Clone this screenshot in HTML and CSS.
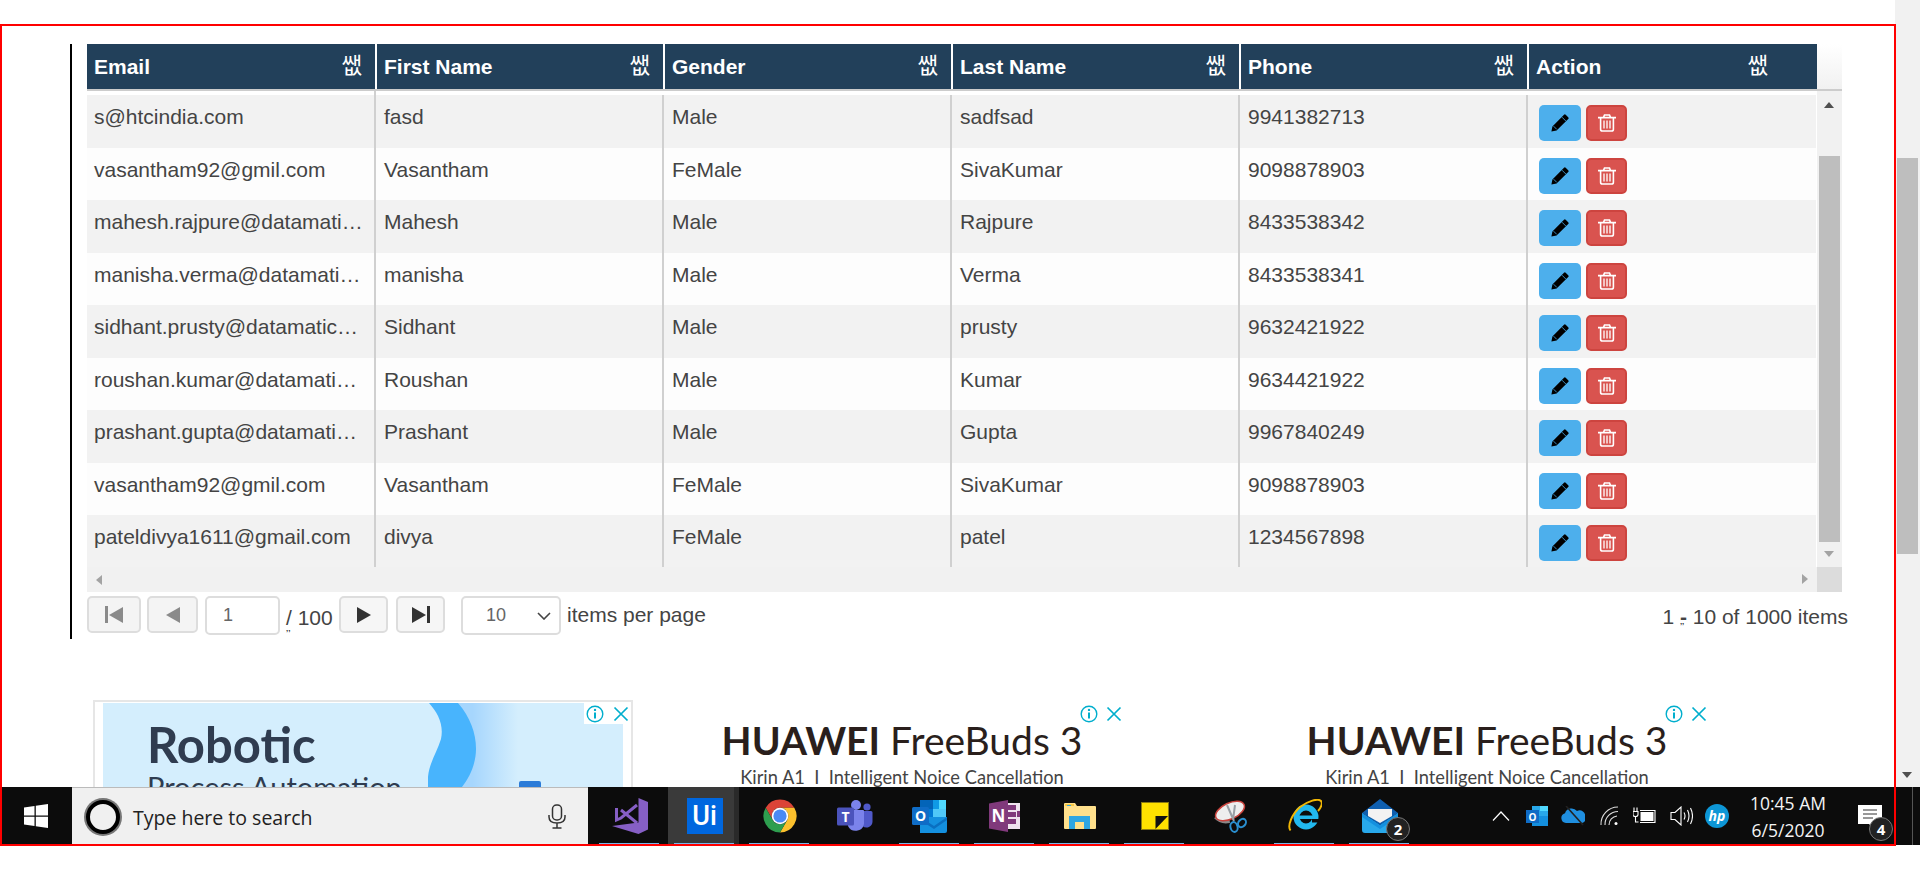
FILE: index.html
```html
<!DOCTYPE html>
<html lang="en">

<head>
  <meta charset="UTF-8">
  <title>Users</title>
  <link rel="stylesheet" href="styles.css">
</head>

<body>
  <svg class="defs" width="0" height="0">
    <symbol id="pencil" viewBox="0 0 18 18">
      <path d="M13 .8a1.2 1.2 0 0 1 1.7 0l2.500 2.500a1.2 1.2 0 0 1 0 1.7L5.600 16.600.4 17.600l1-5.200z" fill="#000" />
      <path d="M11 3.200l3.800 3.800M2.600 12.200l3.200 3.200" stroke="#4dafec" stroke-width=".8" fill="none" />
    </symbol>
    <symbol id="trash" viewBox="0 0 18 18">
      <path d="M0 3.600h18M5.500 3.400l1-2.400h5l1 2.400M2.600 3.600v11.600q0 1.800 1.800 1.800h9.200q1.800 0 1.800-1.800V3.600" stroke="#fff" stroke-width="1.600" fill="none" />
      <path d="M6 6.500v8M9 6.500v8M12 6.500v8" stroke="#fff" stroke-width="1.300" fill="none" />
    </symbol>
    <symbol id="ad-info" viewBox="0 0 18 18">
      <circle cx="9" cy="9" r="7.800" stroke="#00aecd" stroke-width="1.400" fill="none" />
      <path d="M9 7.500v6" stroke="#00aecd" stroke-width="2" />
      <circle cx="9" cy="4.900" r="1.200" fill="#00aecd" />
    </symbol>
    <symbol id="ad-close" viewBox="0 0 16 16">
      <path d="M1.500 1.500l13 13M14.500 1.500l-13 13" stroke="#00aecd" stroke-width="1.700" />
    </symbol>
  </svg>

  <div class="window">
    <main class="page">
      <section class="grid-panel">
        <div class="grid">
          <div class="grid-head">
            <div class="head-cells">
              <div class="head-cell">Email<span class="sort">쌦</span></div>
              <div class="head-cell">First Name<span class="sort">쌦</span></div>
              <div class="head-cell">Gender<span class="sort">쌦</span></div>
              <div class="head-cell">Last Name<span class="sort">쌦</span></div>
              <div class="head-cell">Phone<span class="sort">쌦</span></div>
              <div class="head-cell head-cell-action">Action<span class="sort">쌦</span></div>
            </div>
            <div class="head-filler"></div>
          </div>

          <div class="grid-body">
            <div class="rows">
              <div class="row">
                <div class="cell">s@htcindia.com</div>
                <div class="cell">fasd</div>
                <div class="cell">Male</div>
                <div class="cell">sadfsad</div>
                <div class="cell">9941382713</div>
                <div class="cell cell-action">
                  <button class="btn btn-edit"><svg><use href="#pencil" /></svg></button>
                  <button class="btn btn-delete"><svg><use href="#trash" /></svg></button>
                </div>
              </div>
              <div class="row">
                <div class="cell">vasantham92@gmil.com</div>
                <div class="cell">Vasantham</div>
                <div class="cell">FeMale</div>
                <div class="cell">SivaKumar</div>
                <div class="cell">9098878903</div>
                <div class="cell cell-action">
                  <button class="btn btn-edit"><svg><use href="#pencil" /></svg></button>
                  <button class="btn btn-delete"><svg><use href="#trash" /></svg></button>
                </div>
              </div>
              <div class="row">
                <div class="cell">mahesh.rajpure@datamati…</div>
                <div class="cell">Mahesh</div>
                <div class="cell">Male</div>
                <div class="cell">Rajpure</div>
                <div class="cell">8433538342</div>
                <div class="cell cell-action">
                  <button class="btn btn-edit"><svg><use href="#pencil" /></svg></button>
                  <button class="btn btn-delete"><svg><use href="#trash" /></svg></button>
                </div>
              </div>
              <div class="row">
                <div class="cell">manisha.verma@datamati…</div>
                <div class="cell">manisha</div>
                <div class="cell">Male</div>
                <div class="cell">Verma</div>
                <div class="cell">8433538341</div>
                <div class="cell cell-action">
                  <button class="btn btn-edit"><svg><use href="#pencil" /></svg></button>
                  <button class="btn btn-delete"><svg><use href="#trash" /></svg></button>
                </div>
              </div>
              <div class="row">
                <div class="cell">sidhant.prusty@datamatic…</div>
                <div class="cell">Sidhant</div>
                <div class="cell">Male</div>
                <div class="cell">prusty</div>
                <div class="cell">9632421922</div>
                <div class="cell cell-action">
                  <button class="btn btn-edit"><svg><use href="#pencil" /></svg></button>
                  <button class="btn btn-delete"><svg><use href="#trash" /></svg></button>
                </div>
              </div>
              <div class="row">
                <div class="cell">roushan.kumar@datamati…</div>
                <div class="cell">Roushan</div>
                <div class="cell">Male</div>
                <div class="cell">Kumar</div>
                <div class="cell">9634421922</div>
                <div class="cell cell-action">
                  <button class="btn btn-edit"><svg><use href="#pencil" /></svg></button>
                  <button class="btn btn-delete"><svg><use href="#trash" /></svg></button>
                </div>
              </div>
              <div class="row">
                <div class="cell">prashant.gupta@datamati…</div>
                <div class="cell">Prashant</div>
                <div class="cell">Male</div>
                <div class="cell">Gupta</div>
                <div class="cell">9967840249</div>
                <div class="cell cell-action">
                  <button class="btn btn-edit"><svg><use href="#pencil" /></svg></button>
                  <button class="btn btn-delete"><svg><use href="#trash" /></svg></button>
                </div>
              </div>
              <div class="row">
                <div class="cell">vasantham92@gmil.com</div>
                <div class="cell">Vasantham</div>
                <div class="cell">FeMale</div>
                <div class="cell">SivaKumar</div>
                <div class="cell">9098878903</div>
                <div class="cell cell-action">
                  <button class="btn btn-edit"><svg><use href="#pencil" /></svg></button>
                  <button class="btn btn-delete"><svg><use href="#trash" /></svg></button>
                </div>
              </div>
              <div class="row">
                <div class="cell">pateldivya1611@gmail.com</div>
                <div class="cell">divya</div>
                <div class="cell">FeMale</div>
                <div class="cell">patel</div>
                <div class="cell">1234567898</div>
                <div class="cell cell-action">
                  <button class="btn btn-edit"><svg><use href="#pencil" /></svg></button>
                  <button class="btn btn-delete"><svg><use href="#trash" /></svg></button>
                </div>
              </div>
            </div>
            <div class="vscroll">
              <span class="arrow arrow-up"></span>
              <span class="vscroll-thumb"></span>
              <span class="arrow arrow-down"></span>
            </div>
          </div>

          <div class="grid-foot">
            <div class="hscroll">
              <span class="arrow arrow-left"></span>
              <span class="arrow arrow-right"></span>
            </div>
            <div class="corner"></div>
          </div>
        </div>

        <div class="pager">
          <button class="pg-btn pg-first is-off"><span class="bar"></span><span class="tri-left"></span></button>
          <button class="pg-btn pg-prev is-off"><span class="tri-left"></span></button>
          <input class="pg-input" value="1">
          <span class="pg-total"><span class="glitch">/</span> 100</span>
          <button class="pg-btn pg-next"><span class="tri-right"></span></button>
          <button class="pg-btn pg-last"><span class="tri-right"></span><span class="bar"></span></button>
          <div class="pg-size">10
            <svg width="14" height="8" viewBox="0 0 14 8"><path d="M1 1l6 6 6-6" stroke="#444" stroke-width="1.600" fill="none" /></svg>
          </div>
          <span class="pg-label">items per page</span>
          <span class="pg-info">1 <span class="glitch glitch-dash">-</span> 10 of 1000 items</span>
        </div>
      </section>

      <section class="ads">
        <div class="ad ad-robotic">
          <div class="ad-panel">
            <svg class="ad-curve" width="100" height="84" viewBox="0 0 100 84">
              <defs>
                <linearGradient id="glow" x1="0" x2="1">
                  <stop offset="0.35" stop-color="#a6d6fd" />
                  <stop offset="1" stop-color="#d4eefd" />
                </linearGradient>
              </defs>
              <path d="M20 0H90V84H20z" fill="url(#glow)" />
              <path d="M1 0H30C42 14 48 30 48 46 48 60 42 74 34 84H0C-2 64 8 52 13 36 16 22 10 10 1 0z" fill="#48b4fd" />
            </svg>
            <div class="ad-title">Robotic</div>
            <div class="ad-sub">Process Automation</div>
            <span class="ad-chip"></span>
          </div>
          <div class="ad-tools ad-tools-white">
            <svg width="18" height="18"><use href="#ad-info" /></svg>
            <svg width="16" height="16"><use href="#ad-close" /></svg>
          </div>
        </div>
        <div class="ad ad-huawei">
          <div class="hw-title"><b>HUAWEI</b> FreeBuds 3</div>
          <div class="hw-sub">Kirin A1 &nbsp;I&nbsp; Intelligent Noice Cancellation</div>
          <div class="ad-tools">
            <svg width="18" height="18"><use href="#ad-info" /></svg>
            <svg width="16" height="16"><use href="#ad-close" /></svg>
          </div>
        </div>
        <div class="ad ad-huawei ad-last">
          <div class="hw-title"><b>HUAWEI</b> FreeBuds 3</div>
          <div class="hw-sub">Kirin A1 &nbsp;I&nbsp; Intelligent Noice Cancellation</div>
          <div class="ad-tools">
            <svg width="18" height="18"><use href="#ad-info" /></svg>
            <svg width="16" height="16"><use href="#ad-close" /></svg>
          </div>
        </div>
      </section>
    </main>

    <div class="page-scroll">
      <span class="page-thumb"></span>
      <span class="arrow arrow-down arrow-dark"></span>
    </div>
  </div>

  <footer class="taskbar">
    <div class="start">
      <svg width="24" height="24" viewBox="0 0 24 24" fill="#fff">
        <polygon points="0,3.500 10.500,2 10.500,11.500 0,11.500" />
        <polygon points="11.800,1.800 24,0 24,11.500 11.800,11.500" />
        <polygon points="0,12.800 10.500,12.800 10.500,22 0,20.500" />
        <polygon points="11.800,12.800 24,12.800 24,24 11.800,22.200" />
      </svg>
    </div>
    <div class="search">
      <span class="cortana"></span>
      <span class="search-text">Type here to search</span>
      <svg class="mic" width="18" height="25" viewBox="0 0 18 25" fill="none" stroke="#333" stroke-width="1.500">
        <rect x="4.500" y="1" width="9" height="15" rx="4" />
        <path d="M1 11v2q0 6 8 6t8-6v-2M9 19v5M4.500 24h9" />
      </svg>
    </div>

    <div class="tasks">
      <div class="task is-open">
        <svg width="36" height="36" viewBox="0 0 36 36">
          <path d="M26.500 0L36 4v27.500L26.500 36 0 28l26.500-3.500z" fill="#865fc5" />
          <path d="M4.500 10v12L9 20 25 7M9 12l16 13" stroke="#865fc5" stroke-width="3" fill="none" />
        </svg>
      </div>
      <div class="task is-open is-active">
        <span class="ui-logo">Ui</span>
      </div>
      <div class="task is-open">
        <svg width="34" height="34" viewBox="0 0 34 34">
          <path d="M2.700 8.750A16.500 16.500 0 0 1 31.300 8.750H17A8.250 8.250 0 0 0 9.860 21.130z" fill="#db4437" />
          <path d="M31.300 8.750A16.500 16.500 0 0 1 17 33.500L24.140 21.130A8.250 8.250 0 0 0 17 8.750z" fill="#fbc02d" />
          <path d="M17 33.500A16.500 16.500 0 0 1 2.700 8.750L9.860 21.130A8.250 8.250 0 0 0 24.140 21.130z" fill="#2e9e4f" />
          <circle cx="17" cy="17" r="8.300" fill="#fff" />
          <circle cx="17" cy="17" r="6.600" fill="#4a8af4" />
        </svg>
      </div>
      <div class="task">
        <svg width="36" height="33" viewBox="0 0 36 33">
          <circle cx="19" cy="5" r="5" fill="#7b83eb" />
          <circle cx="30" cy="7" r="3.600" fill="#5059c9" />
          <path d="M25 11h9q1.500 0 1.500 1.500v9a6 6 0 0 1-10 4.500z" fill="#5059c9" />
          <path d="M11 10h15q1 0 1 1v13a8.500 8.500 0 0 1-16 2z" fill="#7b83eb" />
          <rect x="0" y="7.500" width="17" height="18" rx="1.500" fill="#4b53bc" />
          <text x="8.500" y="21.500" class="logo-text" font-size="14">T</text>
        </svg>
      </div>
      <div class="task is-open">
        <svg width="35" height="33" viewBox="0 0 35 33">
          <rect x="8" y="0" width="26" height="17" fill="#28a8ea" />
          <rect x="8" y="0" width="13" height="9" fill="#0364b8" />
          <rect x="21" y="0" width="13" height="9" fill="#0f9ae6" />
          <rect x="27" y="0" width="7" height="9" fill="#50d9ff" />
          <rect x="21" y="9" width="13" height="8" fill="#50c8f8" />
          <rect x="8" y="9" width="13" height="8" fill="#0078d4" />
          <path d="M8 17h27v14q0 2-2 2H8z" fill="#1490df" />
          <path d="M8 17l14 9 13-9v3L22 29 8 20z" fill="#0a6fc0" />
          <rect x="0" y="7" width="17" height="18" rx="1.500" fill="#0f6cc6" />
          <text x="8.500" y="21" class="logo-text" font-size="14">O</text>
        </svg>
      </div>
      <div class="task is-open">
        <svg width="31" height="32" viewBox="0 0 31 32">
          <path d="M0 3.500L19 0v32L0 28.500z" fill="#80397b" />
          <rect x="19" y="3" width="12" height="26" fill="#efe3ee" />
          <path d="M19 5h8v5h-8zM19 12h8v5h-8zM19 19h8v5h-8zM28 11h3v6h-3z" fill="#80397b" />
          <text x="9.500" y="22" class="logo-text" font-size="17">N</text>
        </svg>
      </div>
      <div class="task is-open">
        <svg width="32" height="26" viewBox="0 0 32 26">
          <path d="M0 1q0-1 1-1h10l2 3h18q1 0 1 1v21q0 1-1 1H1q-1 0-1-1z" fill="#ffe08c" />
          <path d="M1 1h9v2H1z" fill="#f6c744" />
          <path d="M3 2h4v1H3z" fill="#2fa6e2" />
          <path d="M5 13h21v13h-6v-7H11v7H5z" fill="#2fa6e2" />
        </svg>
      </div>
      <div class="task is-open">
        <svg width="28" height="28" viewBox="0 0 28 28">
          <rect x=".5" y=".5" width="27" height="27" fill="#ffe100" stroke="#8a7a10" />
          <path d="M14.500 14H27L14.500 27z" fill="#111" />
        </svg>
      </div>
      <div class="task">
        <svg width="34" height="34" viewBox="0 0 34 34" fill="none">
          <path d="M1 19q8-4 15-1l1 6q-10 2-16-5z" fill="#888" />
          <ellipse cx="17" cy="12" rx="15.500" ry="8" transform="rotate(-25 17 12)" fill="#eee" stroke="#c8413b" stroke-width="1.500" />
          <path d="M14 6l7 16M22 6l-2 15" stroke="#9aa0a6" stroke-width="2" />
          <ellipse cx="21" cy="28" rx="3.500" ry="5" transform="rotate(-15 21 28)" stroke="#2a8fd0" stroke-width="2" />
          <ellipse cx="29" cy="24" rx="3.500" ry="4.500" transform="rotate(40 29 24)" stroke="#2a8fd0" stroke-width="2" />
        </svg>
      </div>
      <div class="task is-open">
        <svg width="34" height="34" viewBox="0 0 34 34" fill="none">
          <circle cx="18" cy="18" r="9.500" stroke="#22b8ee" stroke-width="6" />
          <rect x="9" y="16.500" width="19" height="3.500" fill="#22b8ee" />
          <rect x="24" y="20" width="10" height="3.500" fill="#0c0c0c" />
          <path d="M2.500 31.500C-1 27 4 15 12 8 20 2 30-1 33 2c2 2 0 7-3 10" stroke="#f2b705" stroke-width="2" />
        </svg>
      </div>
      <div class="task is-open has-badge">
        <svg width="36" height="34" viewBox="0 0 36 34">
          <path d="M0 14l18 12 18-12v17q0 3-3 3H3q-3 0-3-3z" fill="#28a8ea" />
          <path d="M18 0l18 14-18 12L0 14z" fill="#0f5fb0" />
          <path d="M6 10h24v7l-12 7-12-7z" fill="#f2f2f2" />
          <path d="M0 14l18 12 18-12v4L18 30 0 18z" fill="#1490df" />
        </svg>
        <span class="badge">2</span>
      </div>
    </div>

    <div class="tray">
      <span class="tray-icon">
        <svg width="18" height="10" viewBox="0 0 18 10" fill="none"><path d="M1 9.500L9 1l8 8.500" stroke="#fff" stroke-width="1.200" /></svg>
      </span>
      <span class="tray-icon">
        <svg width="22" height="20" viewBox="0 0 22 20">
          <rect x="6" y="0" width="16" height="10" fill="#28a8ea" />
          <rect x="14" y="0" width="8" height="5" fill="#50d9ff" />
          <path d="M6 10h16v10H6z" fill="#1490df" />
          <rect x="0" y="4" width="13" height="13" fill="#0f6cc6" />
          <text x="6.500" y="14.500" class="logo-text" font-size="10">O</text>
        </svg>
      </span>
      <span class="tray-icon">
        <svg width="24" height="20" viewBox="0 0 24 20">
          <path d="M5 17a5 5 0 0 1-1-9.800A7 7 0 0 1 16 5a5.500 5.500 0 0 1 8 6 4 4 0 0 1-3 6z" fill="#1f8fe0" />
          <path d="M5 0l17 19" stroke="#222" stroke-width="1.600" />
        </svg>
      </span>
      <span class="tray-icon">
        <svg width="19" height="20" viewBox="0 0 19 20" fill="none" stroke="#ddd" stroke-width="1.100">
          <path d="M1 19A17 17 0 0 1 18 1M5 19A13 13 0 0 1 18 5.500M9 19a9 9 0 0 1 8-9" />
          <circle cx="16" cy="17.500" r="1.500" fill="#fff" stroke="none" />
        </svg>
      </span>
      <span class="tray-icon">
        <svg width="24" height="18" viewBox="0 0 24 18" fill="none" stroke="#fff" stroke-width="1.100">
          <path d="M1 .5v4M4 .5v4M0 4.500h5v3q0 2-2.500 2T0 7.500zM2.500 9.500V15h3" />
          <path d="M7 3.500h15v12H7" />
          <rect x="7.500" y="5" width="13" height="9" fill="#fff" stroke="none" />
        </svg>
      </span>
      <span class="tray-icon">
        <svg width="23" height="20" viewBox="0 0 23 20" fill="none" stroke="#fff" stroke-width="1.100">
          <path d="M1 6.500h4L11 1v18l-6-5.500H1z" />
          <path d="M14 6.500q2 3.500 0 7M17.500 4q3 6 0 12M20.500 2q4 8 0 16" />
        </svg>
      </span>
      <span class="tray-icon">
        <span class="hp-logo">hp</span>
      </span>
    </div>

    <div class="clock">
      <span>10:45 AM</span>
      <span>6/5/2020</span>
    </div>

    <div class="notify has-badge">
      <svg width="24" height="24" viewBox="0 0 24 24">
        <path d="M0 0h24v19h-8v5l-5-5H0z" fill="#fff" />
        <path d="M5 5h14M5 9h14M5 13h10" stroke="#333" stroke-width="1" />
      </svg>
      <span class="badge">4</span>
    </div>
    <div class="show-desktop"></div>
  </footer>

  <div class="bottom-strip"></div>
  <div class="red-frame"></div>
</body>

</html>
```

FILE: styles.css
```css
* {
  margin: 0;
  padding: 0;
  box-sizing: border-box;
}

html,
body {
  width: 1920px;
  height: 871px;
  overflow: hidden;
  background: #fff;
}

body {
  display: flex;
  flex-direction: column;
  position: relative;
  font-family: 'Liberation Sans', Arial, sans-serif;
  color: #444;
}

button {
  font-family: inherit;
}

.defs {
  position: absolute;
}

.window {
  display: flex;
  height: 787px;
  flex: none;
}

.page {
  width: 1895px;
  height: 787px;
  padding: 44px 0 0 70px;
  overflow: hidden;
}

/* grid */
.grid-panel {
  width: 1772px;
  height: 595px;
  padding-left: 15px;
  border-left: 2px solid #000;
}

.grid {
  width: 1755px;
}

.grid-head {
  display: flex;
  height: 47px;
  border-bottom: 2px solid #ccc;
}

.head-cells {
  display: grid;
  grid-template-columns: 290px repeat(4, 288px) 1fr;
  width: 1730px;
  background: #22405a;
}

.head-cell {
  display: flex;
  align-items: center;
  justify-content: space-between;
  padding: 0 13px 0 7px;
  border-right: 2px solid #fff;
  color: #fff;
  font-size: 21px;
  font-weight: bold;
}

.head-cell-action {
  border-right: 0;
  padding-right: 49px;
}

.sort {
  font-family: 'Noto Sans CJK KR', sans-serif;
  font-size: 22px;
  font-weight: normal;
  line-height: 22px;
  margin-top: -7px;
}

.head-filler {
  width: 25px;
  background: linear-gradient(#fff, #f1f1f1);
}

.grid-body {
  display: flex;
  height: 476px;
}

.rows {
  width: 1730px;
  padding-top: 4px;
  border-right: 1px solid #fff;
  background: linear-gradient(90deg, #fff 287px, #d0d0d0 287px, #d0d0d0 289px, #fff 289px) 0 0 / 100% 4px no-repeat;
}

.row {
  display: grid;
  grid-template-columns: 289px repeat(4, 288px) 1fr;
  height: 52.5px;
  background: #fdfdfd;
}

.row:nth-child(odd) {
  background: #f2f2f2;
}

.cell {
  min-width: 0;
  padding: 10px 8px 0 8px;
  border-right: 2px solid #d0d0d0;
  font-size: 21px;
  line-height: 24px;
  white-space: nowrap;
}

.cell:first-child {
  padding-left: 7px;
}

.cell-action {
  display: flex;
  gap: 5px;
  padding-left: 11px;
  border-right: 0;
}

.btn {
  width: 42px;
  height: 36px;
  display: flex;
  align-items: center;
  justify-content: center;
  border: 0;
  border-radius: 5px;
}

.btn svg {
  width: 18px;
  height: 18px;
}

.btn-edit {
  background: #4dafec;
}

.btn-delete {
  width: 41px;
  background: #d9534f;
  border: 2px solid #cd443f;
}

/* scrollbars */
.vscroll {
  width: 25px;
  padding: 0 2px;
  background: #f1f1f1;
  position: relative;
}

.vscroll-thumb {
  display: block;
  height: 386px;
  margin-top: 65px;
  background: #bebebe;
}

.arrow {
  position: absolute;
  width: 0;
  height: 0;
  border-style: solid;
  border-color: transparent;
}

.arrow-up {
  top: 11px;
  left: 7px;
  border-width: 0 5.500px 6px;
  border-bottom-color: #505050;
}

.arrow-down {
  bottom: 10px;
  left: 7px;
  border-width: 6px 5.500px 0;
  border-top-color: #a3a3a3;
}

.grid-foot {
  display: flex;
  height: 25px;
}

.hscroll {
  width: 1730px;
  background: #f1f1f1;
  position: relative;
}

.arrow-left {
  top: 8px;
  left: 9px;
  border-width: 5.500px 6px 5.500px 0;
  border-right-color: #a3a3a3;
}

.arrow-right {
  top: 7px;
  right: 9px;
  border-width: 5.500px 0 5.500px 6px;
  border-left-color: #a3a3a3;
}

.corner {
  width: 25px;
  background: #dcdcdc;
}

/* pager */
.pager {
  display: flex;
  align-items: flex-start;
  width: 1761px;
  padding-top: 4px;
  font-size: 21px;
  color: #444;
}

.pg-btn {
  display: flex;
  align-items: center;
  justify-content: center;
  gap: 1px;
  width: 54px;
  height: 37px;
  border: 2px solid #ddd;
  border-radius: 5px;
  background: #f6f6f6;
  color: #333;
}

.pg-prev {
  margin-left: 6px;
  width: 51px;
}

.tri-left,
.tri-right {
  width: 0;
  height: 0;
  border-style: solid;
  border-color: transparent;
}

.tri-left {
  border-width: 8px 14px 8px 0;
  border-right-color: #333;
}

.tri-right {
  border-width: 8px 0 8px 14px;
  border-left-color: #333;
}

.bar {
  width: 3px;
  height: 17px;
  background: #333;
}

.is-off {
  background: #f4f4f4;
}

.is-off .tri-left {
  border-right-color: #8a8a8a;
}

.is-off .bar {
  background: #8a8a8a;
}

.pg-input {
  width: 75px;
  height: 39px;
  margin-left: 7px;
  padding-left: 16px;
  border: 2px solid #ddd;
  border-radius: 5px;
  font-family: inherit;
  font-size: 18px;
  color: #666;
}

.pg-total {
  width: 53px;
  margin-left: 6px;
  padding-top: 10px;
  white-space: nowrap;
}

.glitch {
  position: relative;
}

.glitch::after {
  content: ',,';
  position: absolute;
  left: 0;
  top: 18px;
  font-size: 8px;
  font-weight: bold;
  color: #333;
}

.glitch-dash {
  font-weight: bold;
}

.glitch-dash::after {
  top: 12px;
}

.pg-next {
  width: 49px;
}

.pg-last {
  width: 49px;
  margin-left: 8px;
}

.pg-size {
  display: flex;
  align-items: center;
  justify-content: space-between;
  width: 100px;
  height: 39px;
  margin-left: 16px;
  padding: 0 8px 0 23px;
  border: 2px solid #ddd;
  border-radius: 5px;
  font-size: 18px;
  color: #666;
}

.pg-label {
  margin-left: 6px;
  padding-top: 7px;
}

.pg-info {
  margin-left: auto;
  padding-top: 9px;
}

/* ads */
.ads {
  display: flex;
  margin-top: 61px;
  padding-left: 23px;
}

.ad {
  position: relative;
  height: 200px;
  overflow: hidden;
}

.ad-robotic {
  width: 540px;
  padding: 0 8px 0 8px;
  border: 2px solid #e6e6e6;
  border-bottom: 0;
}

.ad-panel {
  position: relative;
  height: 100%;
  margin-top: 1px;
  padding: 12px 0 0 44px;
  background: #d4eefd;
  overflow: hidden;
}

.ad-curve {
  position: absolute;
  left: 325px;
  top: 0;
}

.ad-title {
  font-family: Lato, sans-serif;
  font-size: 49px;
  font-weight: bold;
  line-height: 58px;
  color: #2f3c50;
}

.ad-sub {
  margin-top: -4px;
  font-family: Lato, sans-serif;
  font-size: 29px;
  line-height: 36px;
  color: #2f3c50;
}

.ad-chip {
  position: absolute;
  left: 416px;
  top: 78px;
  width: 22px;
  height: 10px;
  background: #2a7bd8;
  border-radius: 2px;
}

.ad-tools {
  display: flex;
  align-items: center;
  gap: 8px;
  position: absolute;
  top: 3px;
  right: 5px;
  height: 21px;
  padding: 0 0 0 3px;
}

.ad-tools-white {
  top: 1px;
  right: 0;
  width: 47px;
  background: #fff;
  gap: 9px;
  padding-left: 2px;
}

.ad-huawei {
  width: 450px;
  margin-left: 44px;
  padding-top: 16px;
  text-align: center;
}

.ad-last {
  margin-left: 135px;
}

.hw-title {
  font-family: Lato, sans-serif;
  font-size: 39px;
  line-height: 48px;
  color: #2a1f1c;
  white-space: nowrap;
}

.hw-sub {
  margin-top: 1px;
  font-family: Lato, sans-serif;
  font-size: 18.300px;
  line-height: 24px;
  color: #444;
  white-space: nowrap;
}

/* page scrollbar */
.page-scroll {
  flex: 1;
  position: relative;
  background: #f1f1f1;
  padding: 158px 2px 0;
}

.page-thumb {
  display: block;
  height: 396px;
  background: #bebebe;
}

.arrow-dark {
  bottom: 9px;
  left: 7px;
  border-top-color: #505050;
}

/* taskbar */
.taskbar {
  display: flex;
  height: 58px;
  flex: none;
  background: #0c0c0c;
}

.start {
  display: flex;
  align-items: center;
  justify-content: center;
  width: 72px;
}

.search {
  display: flex;
  align-items: center;
  width: 516px;
  padding: 0 22px 0 14px;
  background: #f0f0f0;
  border-top: 1px solid #bbb;
}

.cortana {
  width: 34px;
  height: 34px;
  border-radius: 50%;
  border: 4px solid #000;
  box-shadow: 0 0 0 2px #777;
  background: #f0f0f0;
}

.search-text {
  margin-left: 13px;
  padding-top: 2px;
  font-family: 'Open Sans', sans-serif;
  font-size: 19.500px;
  color: #222;
}

.mic {
  margin-left: auto;
}

.tasks {
  display: flex;
  margin-left: 4px;
}

.task {
  position: relative;
  display: flex;
  align-items: center;
  justify-content: center;
  width: 75px;
  height: 58px;
}

.is-open::after {
  content: '';
  position: absolute;
  left: 7px;
  right: 8px;
  bottom: 0;
  height: 2px;
  background: #76b9ed;
}

.is-active {
  background: linear-gradient(90deg, transparent 0, transparent 1px, #3a3a3a 1px, #3a3a3a 67px, #2a2a2a 67px, #2a2a2a 72px, transparent 72px);
}

.ui-logo {
  display: flex;
  align-items: center;
  justify-content: center;
  width: 36px;
  height: 36px;
  background: #0067df;
  color: #fff;
  font-family: Roboto, sans-serif;
  font-size: 27px;
  font-weight: 500;
}

.logo-text {
  font-family: 'Open Sans', sans-serif;
  font-weight: bold;
  fill: #fff;
  text-anchor: middle;
}

.has-badge {
  position: relative;
}

.badge {
  position: absolute;
  width: 24px;
  height: 24px;
  border-radius: 50%;
  border: 1px solid #777;
  background: #222;
  color: #fff;
  font-family: 'Open Sans', sans-serif;
  font-size: 15px;
  font-weight: bold;
  line-height: 22px;
  text-align: center;
}

.task .badge {
  left: 44px;
  top: 30px;
}

.tray {
  display: flex;
  margin-left: auto;
}

.tray-icon {
  display: flex;
  align-items: center;
  justify-content: center;
  width: 36px;
  height: 58px;
}

.hp-logo {
  width: 24px;
  height: 24px;
  border-radius: 50%;
  background: #0d96d6;
  color: #fff;
  font-family: 'Open Sans', sans-serif;
  font-size: 14px;
  font-weight: bold;
  font-style: italic;
  line-height: 23px;
  text-align: center;
}

.clock {
  display: flex;
  flex-direction: column;
  align-items: center;
  justify-content: space-between;
  width: 90px;
  height: 58px;
  margin-left: 8px;
  padding: 5px 0 3px;
  color: #f4f4f4;
  font-family: 'Open Sans', sans-serif;
  font-size: 17.500px;
  line-height: 23px;
}

.notify {
  width: 54px;
  margin-left: 10px;
  padding: 18px 0 0 15px;
}

.notify .badge {
  left: 26px;
  top: 30px;
}

.show-desktop {
  width: 23px;
  margin-right: 0;
  background: linear-gradient(90deg, transparent 15px, #555 15px, #555 16px, transparent 16px);
}

.bottom-strip {
  flex: 1;
}

/* the red box drawn on the screenshot */
.red-frame {
  position: absolute;
  left: 0;
  top: 24px;
  width: 1896px;
  height: 822px;
  border: 2px solid #f00;
  pointer-events: none;
}
```
